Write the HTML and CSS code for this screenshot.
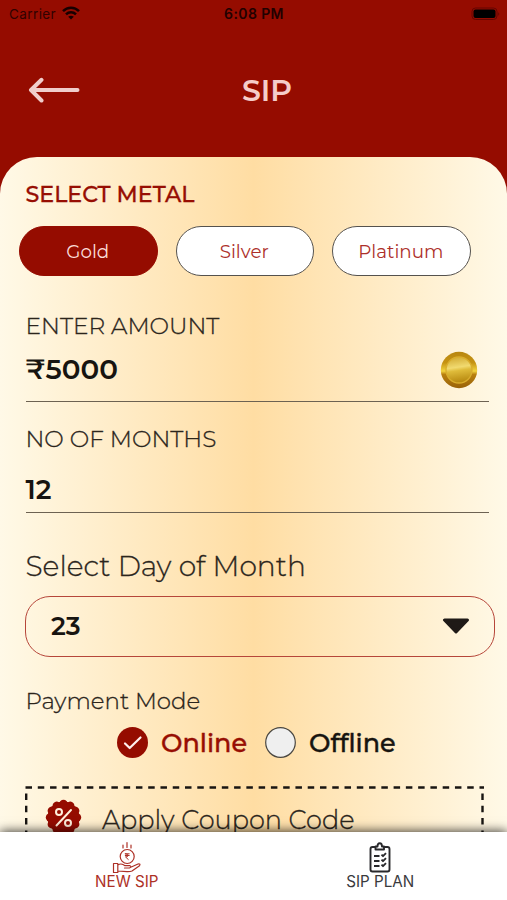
FILE: index.html
```html
<!DOCTYPE html>
<html lang="en">
<head>
<meta charset="utf-8">
<title>SIP</title>
<link rel="stylesheet" href="styles.css">
</head>
<body>
<div class="screen">
  <div class="status">
    <div class="carrier"><span>Carrier</span>
      <svg width="18" height="14" viewBox="0 0 18 14"><g fill="none" stroke="#170000" stroke-width="2.5"><path d="M1 5.2C5.5.6 12.500.6 17 5.200"/><path d="M4 8.300C6.800 5.500 11.200 5.500 14 8.300"/></g><path d="M9 13.600 6.200 10.700Q9 8.600 11.800 10.700Z" fill="#170000"/></svg>
    </div>
    <div class="clock">6:08 PM</div>
    <div class="power"><svg width="30" height="14" viewBox="0 0 30 14"><rect x="1" y="1" width="25" height="11.500" rx="3.500" fill="none" stroke="#650500" stroke-width="1"/><rect x="2.500" y="2.500" width="22" height="8.500" rx="2" fill="#000"/><path d="M27.500 5v4q1.500-2 0-4" fill="#500400"/></svg></div>
  </div>
  <header class="nav">
    <svg class="back" width="52" height="26" viewBox="0 0 52 26"><path d="M13.500 2.800 3 13 13.500 23.500M3.500 13H49.500" fill="none" stroke="#f0cecb" stroke-width="4" stroke-linecap="round" stroke-linejoin="round"/></svg>
    <h1 class="title">SIP</h1>
  </header>
  <main class="sheet">
    <h2 class="heading">SELECT METAL</h2>
    <div class="metals">
      <button class="metal metal-on">Gold</button>
      <button class="metal silver">Silver</button>
      <button class="metal platinum">Platinum</button>
    </div>
    <div class="label amount-label">ENTER AMOUNT</div>
    <div class="field amount"><span class="value"><span class="rupee">₹</span>5000</span>
      <svg width="38" height="38" viewBox="0 0 38 38"><defs><linearGradient id="rim" x1="0" y1="0" x2="0" y2="1"><stop offset="0" stop-color="#b8860f"/><stop offset=".3" stop-color="#c69313"/><stop offset=".53" stop-color="#f2d33f"/><stop offset=".62" stop-color="#b9800f"/><stop offset="1" stop-color="#996209"/></linearGradient><linearGradient id="face" x1="0" y1="0" x2=".15" y2="1"><stop offset="0" stop-color="#cfa52a"/><stop offset=".45" stop-color="#f1da70"/><stop offset=".58" stop-color="#dfbb3a"/><stop offset="1" stop-color="#b98b12"/></linearGradient></defs><circle cx="19" cy="19" r="18.200" fill="url(#rim)"/><circle cx="19" cy="19" r="13" fill="url(#face)" stroke="#d9ad2d" stroke-width="1.300"/></svg>
    </div>
    <div class="label months-label">NO OF MONTHS</div>
    <div class="field months"><span class="value twelve">12</span></div>
    <div class="day-label">Select Day of Month</div>
    <div class="select"><span class="value day">23</span>
      <svg width="28" height="16" viewBox="0 0 28 16"><path d="M2.500 2H25.500L14 14Z" fill="#1f1a17" stroke="#1f1a17" stroke-width="3" stroke-linejoin="round"/></svg>
    </div>
    <div class="label pay-label">Payment Mode</div>
    <div class="modes">
      <div class="mode online"><svg width="31" height="31" viewBox="0 0 31 31"><circle cx="15.500" cy="15.500" r="15.500" fill="#950c00"/><path d="M8 16.500 12.700 21 23.500 10.500" fill="none" stroke="#fff0ee" stroke-width="2.200" stroke-linecap="round" stroke-linejoin="round"/></svg><span>Online</span></div>
      <div class="mode offline"><svg width="31" height="31" viewBox="0 0 31 31"><circle cx="15.500" cy="15.500" r="14.800" fill="#efefef" stroke="#494640" stroke-width="1.200"/></svg><span>Offline</span></div>
    </div>
    <div class="coupon">
      <svg class="dashes" width="460" height="70" viewBox="0 0 460 70"><g fill="none" stroke="#181512" stroke-width="2.400"><path d="M0.500 1.500H459" stroke-dasharray="6.500 5.770"/><path d="M1.200 7.500V70M457.500 7.500V70" stroke-dasharray="6.500 5.800"/></g></svg>
      <svg class="badge" width="37" height="37" viewBox="-18.500 -18.500 37 37"><g fill="#950c00"><circle r="16"/><g id="lobes"><circle cy="-13.500" r="4.200"/><circle cy="13.500" r="4.200"/><circle cx="13.500" r="4.200"/><circle cx="-13.500" r="4.200"/></g><use href="#lobes" transform="rotate(30)"/><use href="#lobes" transform="rotate(60)"/></g><g fill="none" stroke="#fff0dc" stroke-width="2"><path d="M7.500-7.500-7 8" stroke-linecap="round"/><circle cx="-4.500" cy="-5.500" r="3"/><circle cx="4.500" cy="5.500" r="3"/></g></svg>
      <span>Apply Coupon Code</span>
    </div>
  </main>
  <nav class="tabs">
    <a class="tab tab-on"><svg width="30" height="32" viewBox="0 0 30 32"><g fill="none" stroke="#ad3026" stroke-width="1.200" stroke-linejoin="round" stroke-linecap="round"><path d="M15 .6V5.500M11 3V6M19 3V6"/><circle cx="15.200" cy="14.500" r="7"/><g stroke-width="1"><path d="M13.300 11.800H17.200M13.300 13.500H17.200M13.300 11.800Q16.700 11.800 16.200 13.800 15.700 15 13.500 14.900L16.300 17.500"/></g><path d="M1.500 21.500H5.800V30.500H1.500ZM5.800 23C9 21 11 22 13 23.700H18Q20 25 17.500 26H12.500M19.300 25 26 22Q29 21.500 27.500 23.700L20 29Q18.500 29.800 15 29.700L5.800 29"/></g></svg><span>NEW SIP</span></a>
    <a class="tab plan"><svg width="24" height="32" viewBox="0 0 24 32"><g fill="none" stroke="#29292c" stroke-width="1.900" stroke-linejoin="round"><path d="M8 5H4.500Q2.500 5 2.500 7V27.500Q2.500 29.500 4.500 29.500H19.500Q21.500 29.500 21.500 27.500V7Q21.500 5 19.500 5H16"/><path d="M7.500 7.500V4.500H9.500Q9.500 1.200 11.750 1.200T14 4.500H16V7.500Z"/><path d="M6 14H11.500M6 19H11.500M6 24H11.500M13.500 12.700 15 14.200 18 11.200M13.500 17.700 15 19.200 18 16.200M13.500 22.700 15 24.200 18 21.200"/></g></svg><span>SIP PLAN</span></a>
  </nav>
</div>
</body>
</html>
```
FILE: styles.css
```css
* { box-sizing: border-box; }
body { margin: 0; font-family: Montserrat, Inter, "Liberation Sans", sans-serif; color: #171410; }
.screen { width: 507px; height: 900px; overflow: hidden; display: flex; flex-direction: column; background: #950c00; }
.status { display: grid; grid-template-columns: 1fr 1fr 1fr; align-items: center; height: 28px; flex: none; padding: 0 6px 0 9px; font-family: Inter, sans-serif; font-size: 13.5px; color: #300200; }
.carrier { display: flex; gap: 6px; align-items: center; letter-spacing: .4px; }
.carrier svg { margin-top: -2px; }
.clock { text-align: center; font-weight: 600; font-size: 14px; letter-spacing: .4px; color: #210100; padding-right: 1px; margin: -1px 0 0 -1px; }
.power { display: flex; justify-content: flex-end; }
.power svg { margin-top: -1px; }
.nav { height: 129px; flex: none; display: grid; grid-template-columns: 80px 1fr 80px; align-items: start; padding-top: 42px; }
.back { margin: 7px 0 0 28px; }
.title { margin: 0; text-align: center; font-weight: 600; font-size: 30px; line-height: 41px; color: #f5cdca; padding-left: 27px; }
.sheet { flex: 1; min-height: 0; overflow: hidden; padding: 24px 12px 0 25.500px; border-radius: 37px 37px 0 0; background: linear-gradient(90deg, #fff9e7 0%, #ffdda3 50%, #fff9e7 100%); white-space: nowrap; }
.heading { margin: 0; font-size: 22.200px; line-height: 28px; font-weight: 500; color: #970e03; -webkit-text-stroke: .3px; }
.metals { display: flex; gap: 18px; margin: 17px 0 0 -6.500px; }
.metal { width: 138.500px; height: 50px; border-radius: 25px; border: 1.300px solid #55524e; background: #fff; color: #ad302a; font: 400 18.300px Montserrat, Inter, sans-serif; padding: 0 1px 0 0; }
.metal-on { background: #950c00; border-color: #950c00; color: #fbdcd9; }
.label { font-size: 23.200px; line-height: 28px; font-weight: 300; color: #2b251c; -webkit-text-stroke: .3px; }
.amount-label { margin-top: 36px; }
.field { width: 463px; border-bottom: 1.500px solid #6d6252; display: flex; justify-content: space-between; align-items: center; }
.value { font-size: 27px; font-weight: 600; }
.amount { height: 62px; padding: 0 11px 1px 0; }
.amount .value { font-size: 27.800px; margin-top: -2px; }
.months-label { margin-top: 23px; }
.months { height: 60px; padding-top: 14px; }
.day-label { margin-top: 35px; font-size: 28.100px; line-height: 36px; font-weight: 300; color: #2b251c; -webkit-text-stroke: .3px; }
.select { width: 470px; height: 61px; margin: 12px 0 0 -.5px; border: 1.400px solid #b6463a; border-radius: 25px; display: flex; align-items: center; justify-content: space-between; padding: 0 24px 1px 25px; }
.day { font-size: 25.500px; margin-top: -1px; }
.pay-label { margin-top: 30px; font-size: 22.900px; }
.modes { display: flex; margin: 12px 0 0 91.500px; height: 31px; }
.mode { display: flex; align-items: center; gap: 13px; font-weight: 500; font-size: 25.500px; -webkit-text-stroke: .4px; }
.online { width: 148px; color: #970e03; }
.coupon { position: relative; display: flex; gap: 20px; align-items: center; width: 460px; height: 66px; margin: 28px 0 0 -1px; padding-left: 20.500px; font-size: 25.600px; font-weight: 300; color: #2b251c; -webkit-text-stroke: .3px; }
.coupon span { margin-top: 1px; }
.dashes { position: absolute; left: 0; top: 0; }
.badge { flex: none; margin-top: -3px; }
.tabs { position: relative; flex: none; height: 68px; background: #fff; display: grid; grid-template-columns: 1fr 1fr; box-shadow: 0 -1px 10px rgba(0,0,0,.75); font-family: Inter, sans-serif; font-size: 15.200px; }
.tab { display: flex; flex-direction: column; align-items: center; padding-top: 10px; line-height: 15px; color: #3a3a3d; }
.tab-on { color: #ad3026; }
```
